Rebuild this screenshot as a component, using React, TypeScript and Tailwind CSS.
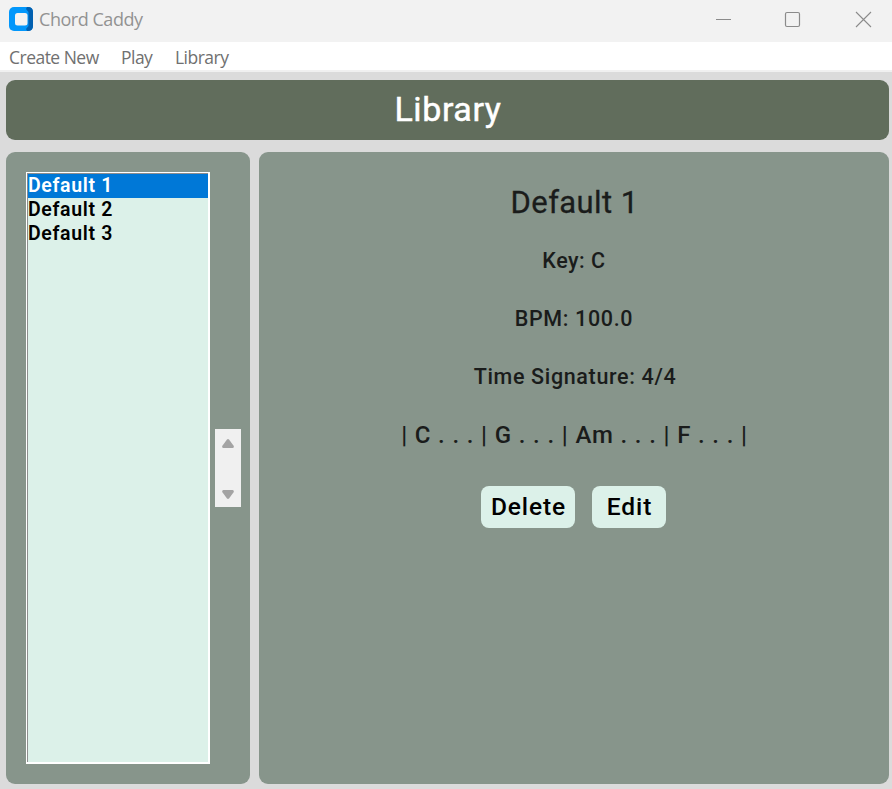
const items = ['Default 1', 'Default 2', 'Default 3'];

function AppIcon() {
  return (
    <svg className="ml-[9px] block" width="24" height="24" viewBox="0 0 24 24">
      <rect width="24" height="24" rx="5" fill="#0297fb" />
      <path d="M18 0H19Q24 0 24 5V19Q24 24 19 24H18L17 22L19.5 19V5L17 2Z" fill="#0260b0" />
      <rect x="6" y="6" width="12.5" height="12.5" rx="2.5" fill="#f3f3f3" />
    </svg>
  );
}

function TitleBar() {
  return (
    <div className="flex h-[42px] items-start bg-[#f2f2f2] pt-[7px] text-[#929292]">
      <AppIcon />
      <span className="ml-[6px] whitespace-nowrap font-['Open_Sans',sans-serif] text-[18px] leading-[25px] tracking-[-0.46px]">
        Chord Caddy
      </span>
      <svg className="ml-auto mr-[20px] block" width="156" height="24" fill="none" stroke="#8b8b8b">
        <path d="M0 12.5H15" />
        <rect x="69.5" y="5.5" width="14" height="14" rx="1.5" strokeWidth="1.2" />
        <path d="M140 5L155 20M155 5L140 20" strokeWidth="1.1" />
      </svg>
    </div>
  );
}

function MenuBar() {
  return (
    <div className="flex h-[28px] items-start gap-[22px] bg-white pl-[9px] pt-[3px] font-['Open_Sans',sans-serif] text-[17.5px] leading-[25px] tracking-[-0.52px] text-[#707070]">
      <span className="w-[90px] whitespace-nowrap">Create New</span>
      <span className="w-[32px]">Play</span>
      <span>Library</span>
    </div>
  );
}

function Sidebar() {
  return (
    <div className="flex w-[244px] rounded-[9px] bg-[#87958b] pl-[20px] pt-[20px]">
      <div className="h-[592px] w-[184px] border border-white border-r-2 border-b-2">
        <div className="h-full border-l border-t border-[#8e8e8e] bg-[#dcf1e9]">
          {items.map((item, i) => (
            <div
              key={item}
              className={
                i === 0
                  ? 'h-[24px] bg-[#0078d7] text-[19.5px] font-semibold leading-[24px] tracking-[0.65px] text-white'
                  : 'h-[24px] text-[19.5px] font-semibold leading-[24px] tracking-[0.65px] text-black'
              }
            >
              {item}
            </div>
          ))}
        </div>
      </div>
      <div className="ml-[5px] mt-[257px] flex h-[78px] w-[26px] flex-col items-center justify-between bg-[#f0f0f0] pt-[10px] pb-[8px]">
        <svg width="12" height="9" viewBox="0 0 12 9" fill="#a3a3a3">
          <path d="M5 .5Q6-.3 7 .5L11.8 7Q12 9 10.7 9H1.3Q0 9 .2 7Z" />
        </svg>
        <svg width="12" height="9" viewBox="0 0 12 9" fill="#a3a3a3">
          <path d="M5 8.5Q6 9.3 7 8.5L11.8 2Q12 0 10.7 0H1.3Q0 0 .2 2Z" />
        </svg>
      </div>
    </div>
  );
}

function Details() {
  return (
    <div className="flex w-[630px] flex-col items-center whitespace-nowrap rounded-[9px] bg-[#87958b] pt-[31px] font-medium text-[#1a1c1b]">
      <div className="h-[51px] pl-px text-[31px] font-normal leading-[40px] tracking-[0.4px] [-webkit-text-stroke:0.3px]">Default 1</div>
      <div className="h-[58px] text-[21.5px] leading-[54px] tracking-[0.5px]">Key: C</div>
      <div className="h-[58px] text-[21.5px] leading-[54px] tracking-[0.65px]">BPM: 100.0</div>
      <div className="h-[58px] pl-[2px] text-[21.5px] leading-[54px] tracking-[0.65px]">Time Signature: 4/4</div>
      <div className="h-[78px] pl-px text-[24px] leading-[54px] tracking-[0.85px]">| C . . . | G . . . | Am . . . | F . . . |</div>
      <div className="mr-[2px] flex gap-[17px] text-[24.5px] leading-[42px] tracking-[0.9px] text-black">
        <button className="h-[42px] w-[94px] rounded-[8px] bg-[#dcf1e9] pl-[2px]">Delete</button>
        <button className="h-[42px] w-[74px] rounded-[8px] bg-[#dcf1e9] pl-[2px]">Edit</button>
      </div>
    </div>
  );
}

export default function App() {
  return (
    <div className="flex h-[789px] w-[892px] flex-col overflow-hidden bg-[#dbdbdb] font-[Roboto,sans-serif]">
      <TitleBar />
      <MenuBar />
      <div className="h-[2px] bg-[#f0f0f0]" />
      <div className="ml-[6px] mt-[8px] h-[60px] w-[883px] shrink-0 rounded-[9px] bg-[#616d5c] pl-px text-center text-[34px] font-normal leading-[58px] tracking-[0.6px] text-white [-webkit-text-stroke:0.5px]">
        Library
      </div>
      <div className="ml-[6px] mt-[12px] flex h-[632px] gap-[9px]">
        <Sidebar />
        <Details />
      </div>
    </div>
  );
}
